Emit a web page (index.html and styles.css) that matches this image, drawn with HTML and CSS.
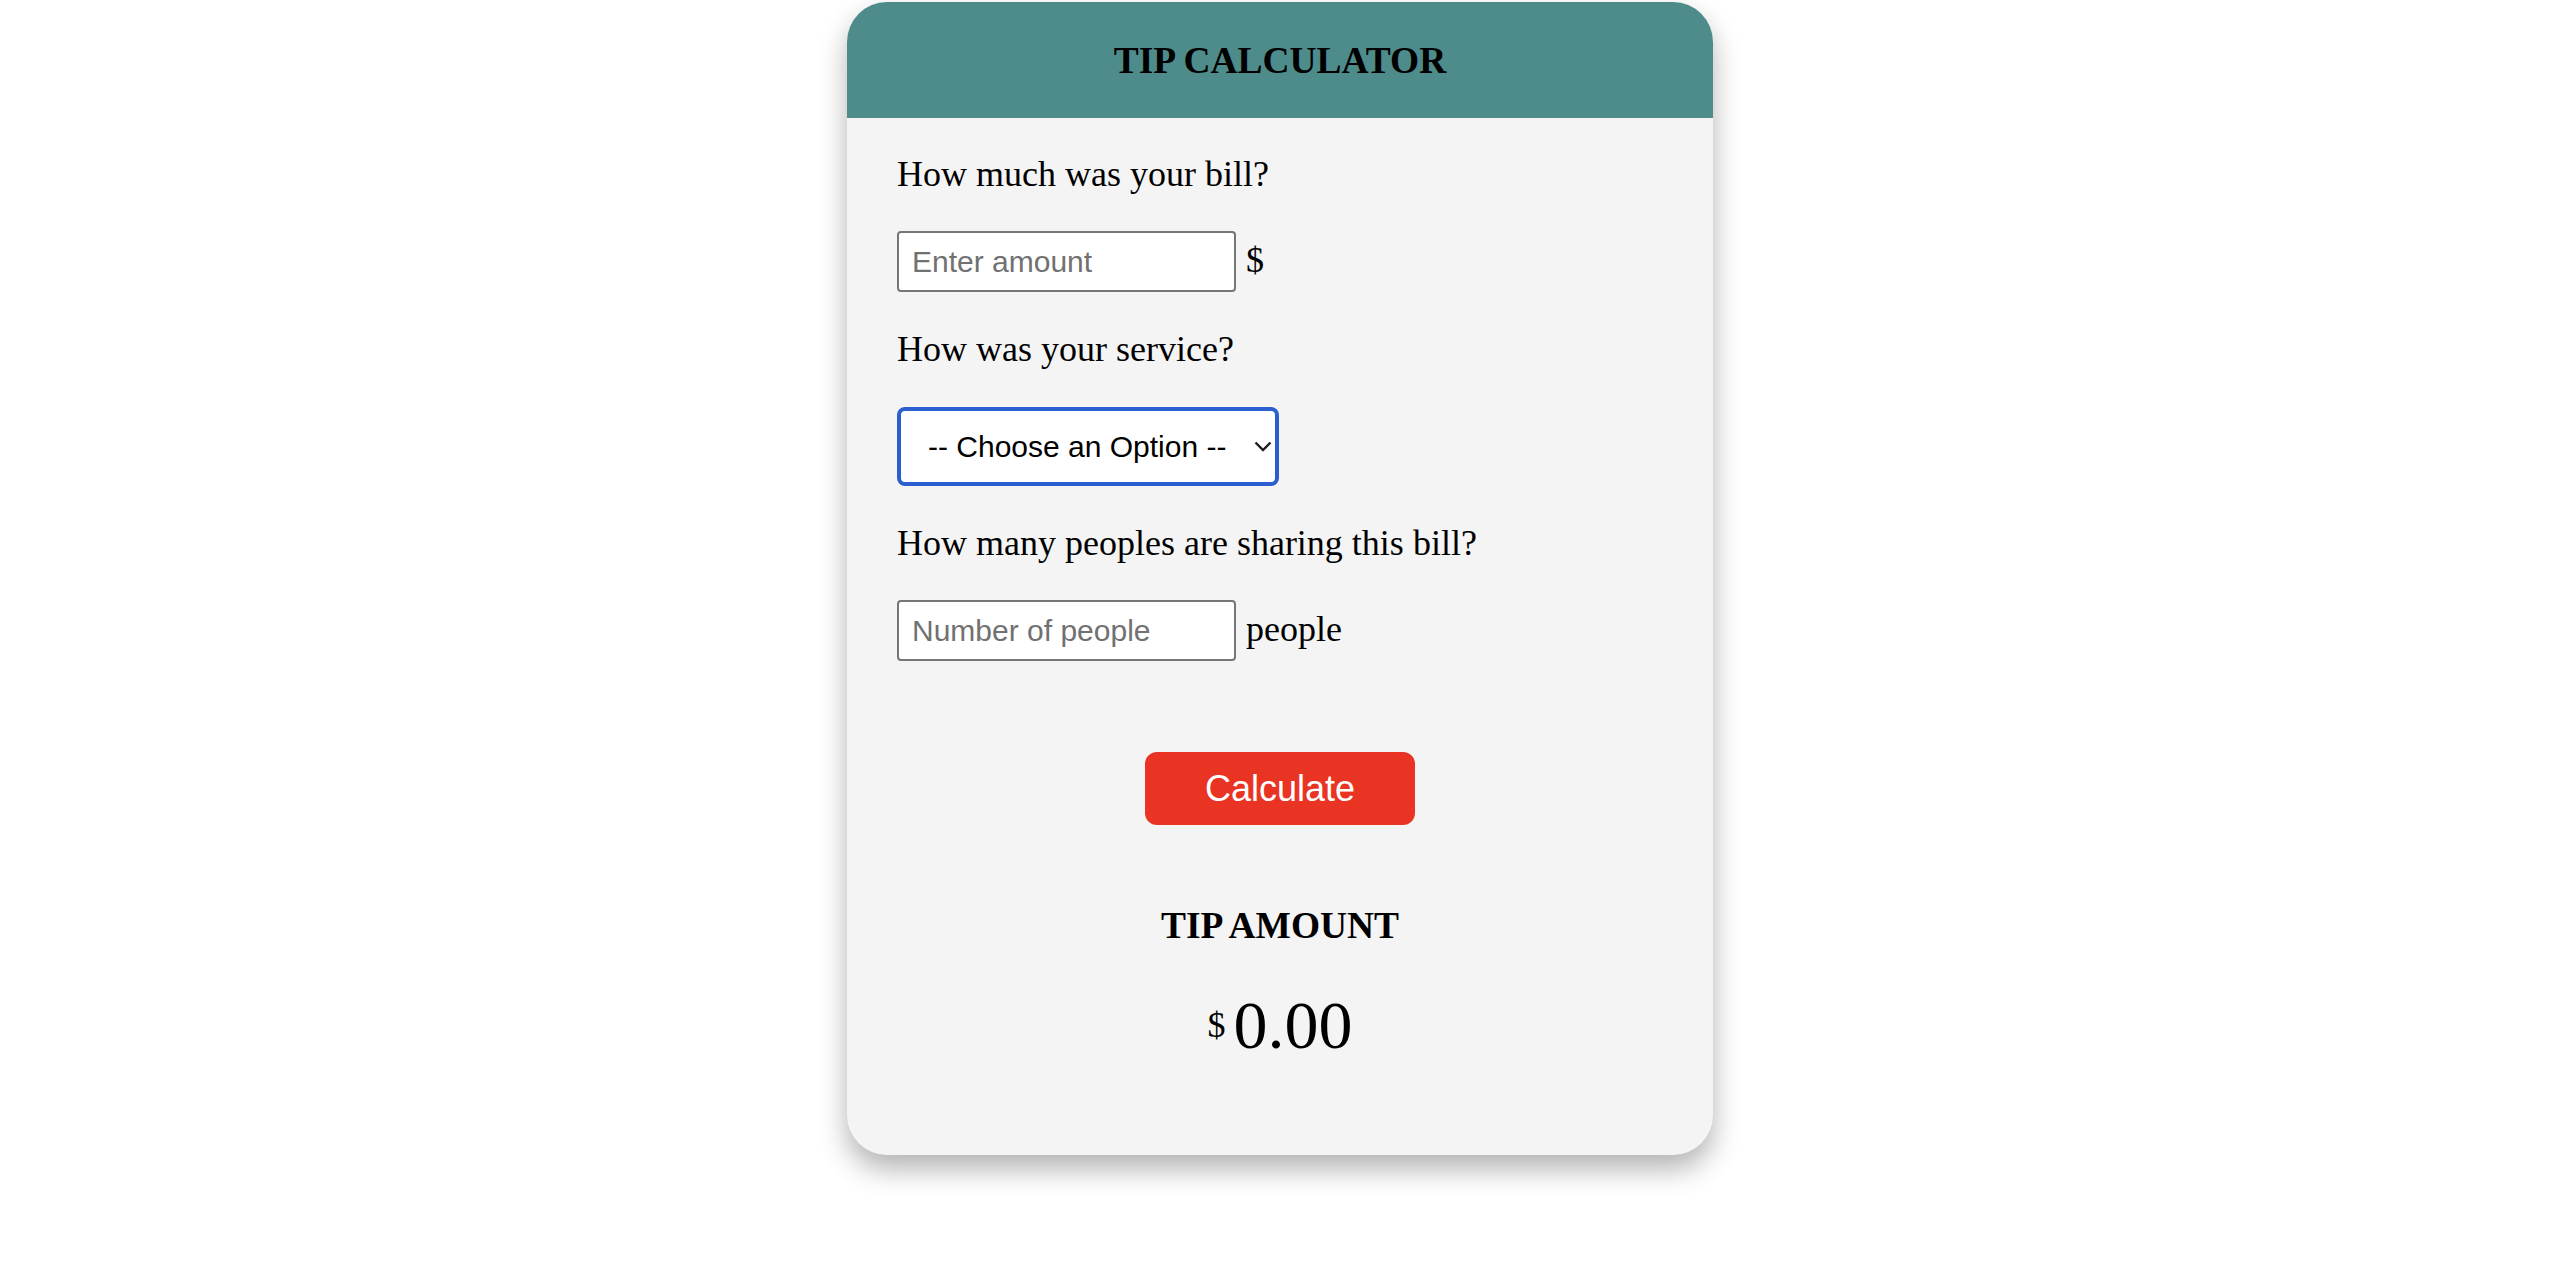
FILE: index.html
```html
<!DOCTYPE html>
<html lang="en">
<head>
<meta charset="utf-8">
<title>Tip Calculator</title>
<link rel="stylesheet" href="styles.css">
</head>
<body>
<div class="page">
<div class="card">
  <div class="card-header">
    <h1 class="title">TIP CALCULATOR</h1>
  </div>
  <div class="card-body">
    <p class="label label-first">How much was your bill?</p>
    <div class="field-row">
      <input class="text-input" type="text" placeholder="Enter amount">
      <span class="unit">$</span>
    </div>
    <p class="label">How was your service?</p>
    <div class="select-wrap">
      <select class="select">
        <option>-- Choose an Option --</option>
        <option>30% - Outstanding</option>
        <option>20% - Good</option>
        <option>15% - It was OK</option>
        <option>10% - Bad</option>
        <option>5% - Terrible</option>
      </select>
      <svg class="chevron" width="18" height="11" viewBox="0 0 18 11"><path d="M1.5 1.5 L9 9 L16.5 1.5" fill="none" stroke="#1f1f1f" stroke-width="2.4"/></svg>
    </div>
    <p class="label">How many peoples are sharing this bill?</p>
    <div class="field-row">
      <input class="text-input" type="text" placeholder="Number of people">
      <span class="unit">people</span>
    </div>
    <div class="button-row">
      <button class="calc-btn" type="button">Calculate</button>
    </div>
    <h3 class="result-title">TIP AMOUNT</h3>
    <div class="result"><span class="result-currency">$</span><span class="result-value">0.00</span></div>
  </div>
</div>
</div>
</body>
</html>
```
FILE: styles.css
```css
* { box-sizing: border-box; }
html, body { margin: 0; padding: 0; background: #ffffff; }
body { font-family: "Liberation Serif", "Times New Roman", serif; color: #000; }

.page {
  min-height: 1284px;
  padding-top: 2px;
}

.card {
  width: 866px;
  margin: 0 auto;
  border-radius: 40px;
  overflow: hidden;
  background: #f4f4f4;
  box-shadow: 0 14px 28px rgba(0, 0, 0, 0.3);
}

.card-header {
  background: #4e8c8b;
  height: 116px;
  padding-top: 37px;
}
.title {
  margin: 0;
  text-align: center;
  font-size: 37.44px;
  line-height: 44px;
  font-weight: bold;
}

.card-body {
  padding: 0 50px 90px;
}

.label {
  margin: 37px 0 0;
  font-size: 36px;
  line-height: 40px;
}
.label-first { margin-top: 36px; }

.field-row {
  margin-top: 37px;
  display: flex;
  align-items: baseline;
  gap: 10px;
}
.text-input {
  width: 339px;
  height: 61px;
  border: 2px solid #767676;
  border-radius: 4px;
  background: #fff;
  padding: 0 13px;
  font-family: "Liberation Sans", Arial, sans-serif;
  font-size: 30px;
  color: #000;
  outline: none;
}
.text-input::placeholder { color: #717171; }
.unit {
  font-size: 36px;
  line-height: 40px;
}

.select-wrap {
  position: relative;
  margin-top: 38px;
  width: 382px;
  height: 79px;
}
.select {
  -webkit-appearance: none;
  appearance: none;
  width: 382px;
  height: 79px;
  border: 4px solid #2b5fcf;
  border-radius: 8px;
  background: #fff;
  padding: 0 0 0 27px;
  font-family: "Liberation Sans", Arial, sans-serif;
  font-size: 30px;
  color: #000;
  outline: none;
}
.chevron {
  position: absolute;
  left: 357px;
  top: 34px;
  pointer-events: none;
}

.button-row {
  margin-top: 91px;
  display: flex;
  justify-content: center;
}
.calc-btn {
  width: 270px;
  height: 73px;
  border: none;
  border-radius: 12px;
  background: #e93323;
  color: #fff;
  font-family: "Liberation Sans", Arial, sans-serif;
  font-size: 36px;
  padding: 0;
}

.result-title {
  margin: 79px 0 0;
  text-align: center;
  font-size: 37.44px;
  line-height: 44px;
  font-weight: bold;
}

.result {
  margin-top: 37px;
  text-align: center;
  font-size: 68px;
  line-height: 80px;
}
.result-currency {
  font-size: 36px;
  line-height: 36px;
  vertical-align: 11px;
  margin-right: 8px;
}
.result-value {
  font-size: 68px;
}
```
